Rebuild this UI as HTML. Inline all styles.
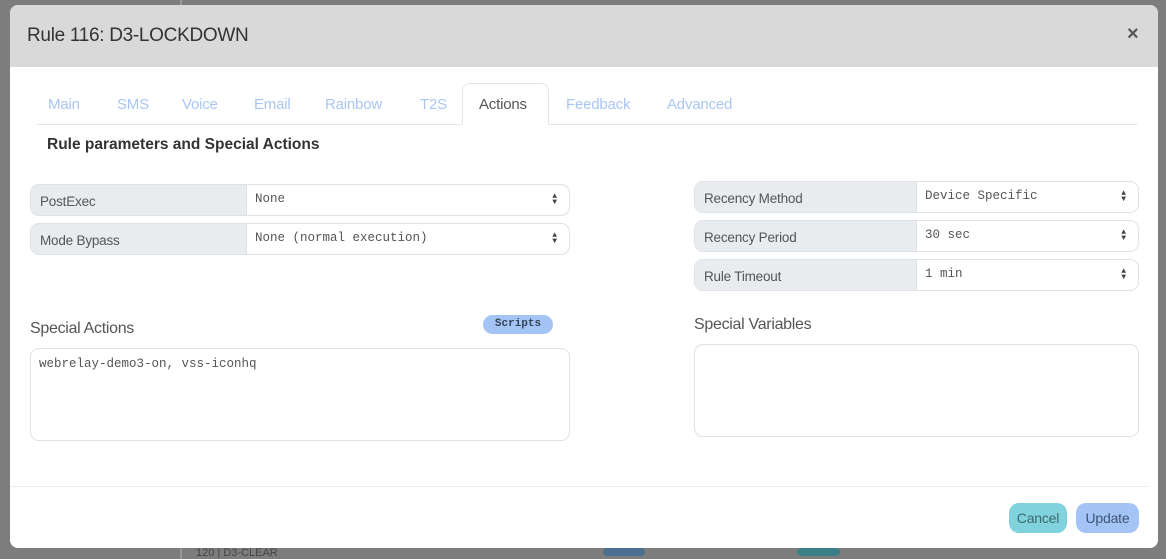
<!DOCTYPE html>
<html><head><meta charset="utf-8"><style>
*{box-sizing:border-box;margin:0;padding:0}
body{width:1166px;height:559px;background:#7d7d7d;font-family:"Liberation Sans",sans-serif;position:relative;overflow:hidden}
.a{position:absolute}
.modal{left:10px;top:5px;width:1148px;height:543px;background:#fff;border-radius:8px;overflow:hidden}
.hdr{left:0;top:0;width:1148px;height:62px;background:#d9d9d9}
.tab{position:absolute;top:91px;font-size:15px;color:#a9c6f3;letter-spacing:-0.2px}
.mono{font-family:"Liberation Mono",monospace;font-size:12.5px;color:#555}
.grp{position:absolute;height:32px;border:1px solid #dee2e6;border-radius:9px;overflow:hidden;display:flex}
.grp .l{background:#e9ecef;border-right:1px solid #dee2e6;font-size:13.5px;color:#555;padding-left:9px;display:flex;align-items:center;padding-top:3px;letter-spacing:-0.2px}
.grp .r{flex:1;display:flex;align-items:center;padding-left:8px;position:relative;padding-bottom:2px}
.arr{position:absolute;right:12px;top:9px;font-size:8px;line-height:6px;color:#444}
.ta{position:absolute;border:1px solid #dee2e6;border-radius:9px}
</style></head><body>
<div class="a" style="left:180px;top:0;width:2px;height:5px;background:#999"></div>
<div class="a" style="left:180px;top:548px;width:2px;height:11px;background:#999"></div>
<div class="a" style="left:196px;top:547px;font-size:11px;color:#444">120 | D3-CLEAR</div>
<div class="a" style="left:603px;top:548px;width:42px;height:8px;background:#4a6f90;border-radius:4px"></div>
<div class="a" style="left:797px;top:548px;width:43px;height:8px;background:#3d7f86;border-radius:4px"></div>
<div class="a modal">
 <div class="a hdr"></div>
 <div class="a" style="left:17px;top:20px;font-size:19px;color:#333;letter-spacing:-0.3px">Rule 116: D3-LOCKDOWN</div>
 <div class="a" style="left:1117px;top:18px;font-size:20px;color:#555;font-weight:bold">×</div>
 <div class="a" style="left:27px;top:119px;width:1101px;height:1px;background:#e6e6e6"></div>
 <div class="a" style="left:452px;top:78px;width:87px;height:42px;border:1px solid #e6e6e6;border-bottom:1px solid #fff;border-radius:8px 8px 0 0;background:#fff"></div>
 <span class="tab" style="left:38px">Main</span>
 <span class="tab" style="left:107px">SMS</span>
 <span class="tab" style="left:172px">Voice</span>
 <span class="tab" style="left:244px">Email</span>
 <span class="tab" style="left:315px">Rainbow</span>
 <span class="tab" style="left:410px">T2S</span>
 <span class="tab" style="left:469px;color:#555">Actions</span>
 <span class="tab" style="left:556px">Feedback</span>
 <span class="tab" style="left:657px">Advanced</span>
 <div class="a" style="left:37px;top:131px;font-size:15.5px;font-weight:bold;color:#333">Rule parameters and Special Actions</div>

 <div class="grp" style="left:20px;top:179px;width:540px"><div class="l" style="width:216px">PostExec</div><div class="r mono">None<span class="arr">▲<br>▼</span></div></div>
 <div class="grp" style="left:20px;top:218px;width:540px"><div class="l" style="width:216px">Mode Bypass</div><div class="r mono">None (normal execution)<span class="arr">▲<br>▼</span></div></div>

 <div class="grp" style="left:684px;top:176px;width:445px"><div class="l" style="width:222px">Recency Method</div><div class="r mono">Device Specific<span class="arr">▲<br>▼</span></div></div>
 <div class="grp" style="left:684px;top:215px;width:445px"><div class="l" style="width:222px">Recency Period</div><div class="r mono">30 sec<span class="arr">▲<br>▼</span></div></div>
 <div class="grp" style="left:684px;top:254px;width:445px"><div class="l" style="width:222px">Rule Timeout</div><div class="r mono">1 min<span class="arr">▲<br>▼</span></div></div>

 <div class="a" style="left:20px;top:315px;font-size:16px;color:#555;letter-spacing:-0.3px">Special Actions</div>
 <div class="a" style="left:473px;top:310px;width:70px;height:19px;background:#a5c4f6;border-radius:10px;font-family:'Liberation Mono',monospace;font-size:11px;font-weight:bold;color:#345;text-align:center;line-height:19px">Scripts</div>
 <div class="ta" style="left:20px;top:343px;width:540px;height:93px"><div class="mono" style="position:absolute;left:8px;top:8px">webrelay-demo3-on, vss-iconhq</div></div>

 <div class="a" style="left:684px;top:311px;font-size:16px;color:#555;letter-spacing:-0.3px">Special Variables</div>
 <div class="ta" style="left:684px;top:339px;width:445px;height:93px"></div>

 <div class="a" style="left:0;top:481px;width:1138px;height:1px;background:#eee"></div>
 <div class="a" style="left:999px;top:498px;width:58px;height:30px;background:#80d2dc;border-radius:10px;font-size:14px;color:#3d6a70;text-align:center;line-height:30px;letter-spacing:-0.2px">Cancel</div>
 <div class="a" style="left:1066px;top:498px;width:63px;height:30px;background:#a5c4f6;border-radius:10px;font-size:14px;color:#3d5478;text-align:center;line-height:30px;letter-spacing:-0.2px">Update</div>
</div>
</body></html>
